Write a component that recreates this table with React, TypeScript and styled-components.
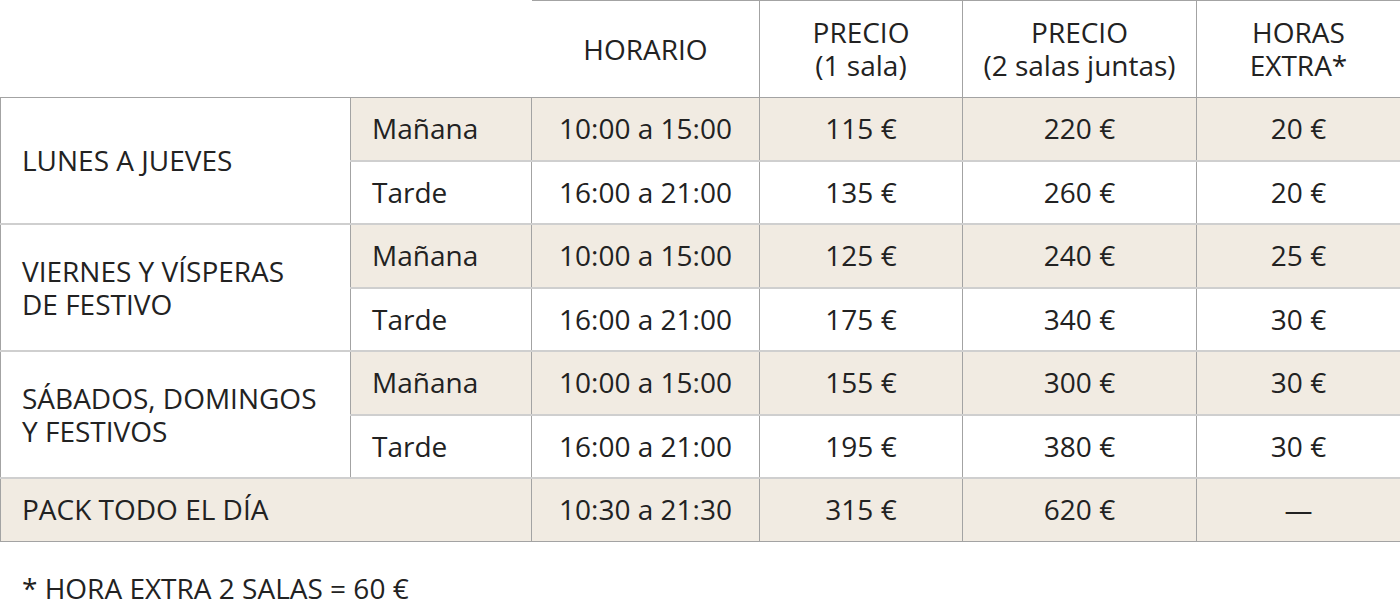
import React from "react";
import styled, { createGlobalStyle } from "styled-components";

const Global = createGlobalStyle`
  html, body { margin: 0; padding: 0; background: #ffffff; }
  body { font-family: "Open Sans", "Noto Sans", sans-serif; color: #222222; }
`;

const Wrap = styled.div`
  width: 1400px;
`;

const Table = styled.table`
  width: 1400px;
  border-collapse: collapse;
  table-layout: fixed;
  font-size: 28px;
  line-height: 33px;
`;

const HeadCell = styled.th<{ $blank?: boolean }>`
  height: 96px;
  padding: 0;
  font-weight: 400;
  text-align: center;
  vertical-align: middle;
  border: 1px solid ${(p) => (p.$blank ? "transparent" : "#a3a3a3")};
  border-bottom: 1px solid #a3a3a3;
  ${(p) => (p.$blank ? "border-left: none; border-top: none;" : "")}
`;

const Row = styled.tr<{ $first?: boolean }>`
  & > td {
    border-top: ${(p) => (p.$first ? "1px solid #a3a3a3" : "2px solid #cfcfcf")};
  }
`;

const Cell = styled.td<{ $shade?: boolean; $left?: boolean; $last?: boolean }>`
  height: 61.5px;
  padding: 0;
  padding-left: ${(p) => (p.$left ? "21px" : "0")};
  text-align: ${(p) => (p.$left ? "left" : "center")};
  vertical-align: middle;
  background: ${(p) => (p.$shade ? "#f1ebe2" : "#ffffff")};
  border-left: 1px solid #a3a3a3;
  border-right: 1px solid #a3a3a3;
  border-bottom: ${(p) => (p.$last ? "1px solid #a3a3a3" : "none")};
`;

const Note = styled.p`
  margin: 29px 0 0 22px;
  font-size: 28px;
  line-height: 34px;
  color: #222222;
`;

type Slot = { turno: string; horario: string; p1: string; p2: string; extra: string };
type Group = { label: React.ReactNode; slots: [Slot, Slot] };

const groups: Group[] = [
  {
    label: "LUNES A JUEVES",
    slots: [
      { turno: "Mañana", horario: "10:00 a 15:00", p1: "115 €", p2: "220 €", extra: "20 €" },
      { turno: "Tarde", horario: "16:00 a 21:00", p1: "135 €", p2: "260 €", extra: "20 €" },
    ],
  },
  {
    label: (
      <>
        VIERNES Y VÍSPERAS
        <br />
        DE FESTIVO
      </>
    ),
    slots: [
      { turno: "Mañana", horario: "10:00 a 15:00", p1: "125 €", p2: "240 €", extra: "25 €" },
      { turno: "Tarde", horario: "16:00 a 21:00", p1: "175 €", p2: "340 €", extra: "30 €" },
    ],
  },
  {
    label: (
      <>
        SÁBADOS, DOMINGOS
        <br />Y FESTIVOS
      </>
    ),
    slots: [
      { turno: "Mañana", horario: "10:00 a 15:00", p1: "155 €", p2: "300 €", extra: "30 €" },
      { turno: "Tarde", horario: "16:00 a 21:00", p1: "195 €", p2: "380 €", extra: "30 €" },
    ],
  },
];

export default function App() {
  return (
    <Wrap>
      <Global />
      <Table>
        <colgroup>
          <col style={{ width: 350 }} />
          <col style={{ width: 181 }} />
          <col style={{ width: 228 }} />
          <col style={{ width: 203 }} />
          <col style={{ width: 234 }} />
          <col style={{ width: 204 }} />
        </colgroup>
        <thead>
          <tr>
            <HeadCell $blank colSpan={2} />
            <HeadCell>HORARIO</HeadCell>
            <HeadCell>
              PRECIO
              <br />
              (1 sala)
            </HeadCell>
            <HeadCell>
              PRECIO
              <br />
              (2 salas juntas)
            </HeadCell>
            <HeadCell>
              HORAS
              <br />
              EXTRA*
            </HeadCell>
          </tr>
        </thead>
        <tbody>
          {groups.map((g, gi) =>
            g.slots.map((s, si) => {
              const shade = si === 0;
              return (
                <Row key={`${gi}-${si}`} $first={gi === 0 && si === 0}>
                  {si === 0 && (
                    <Cell $left rowSpan={2}>
                      {g.label}
                    </Cell>
                  )}
                  <Cell $left $shade={shade}>
                    {s.turno}
                  </Cell>
                  <Cell $shade={shade}>{s.horario}</Cell>
                  <Cell $shade={shade}>{s.p1}</Cell>
                  <Cell $shade={shade}>{s.p2}</Cell>
                  <Cell $shade={shade}>{s.extra}</Cell>
                </Row>
              );
            })
          )}
          <Row>
            <Cell $left $shade $last colSpan={2}>
              PACK TODO EL DÍA
            </Cell>
            <Cell $shade $last>10:30 a 21:30</Cell>
            <Cell $shade $last>315 €</Cell>
            <Cell $shade $last>620 €</Cell>
            <Cell $shade $last>—</Cell>
          </Row>
        </tbody>
      </Table>
      <Note>* HORA EXTRA 2 SALAS = 60 €</Note>
    </Wrap>
  );
}
